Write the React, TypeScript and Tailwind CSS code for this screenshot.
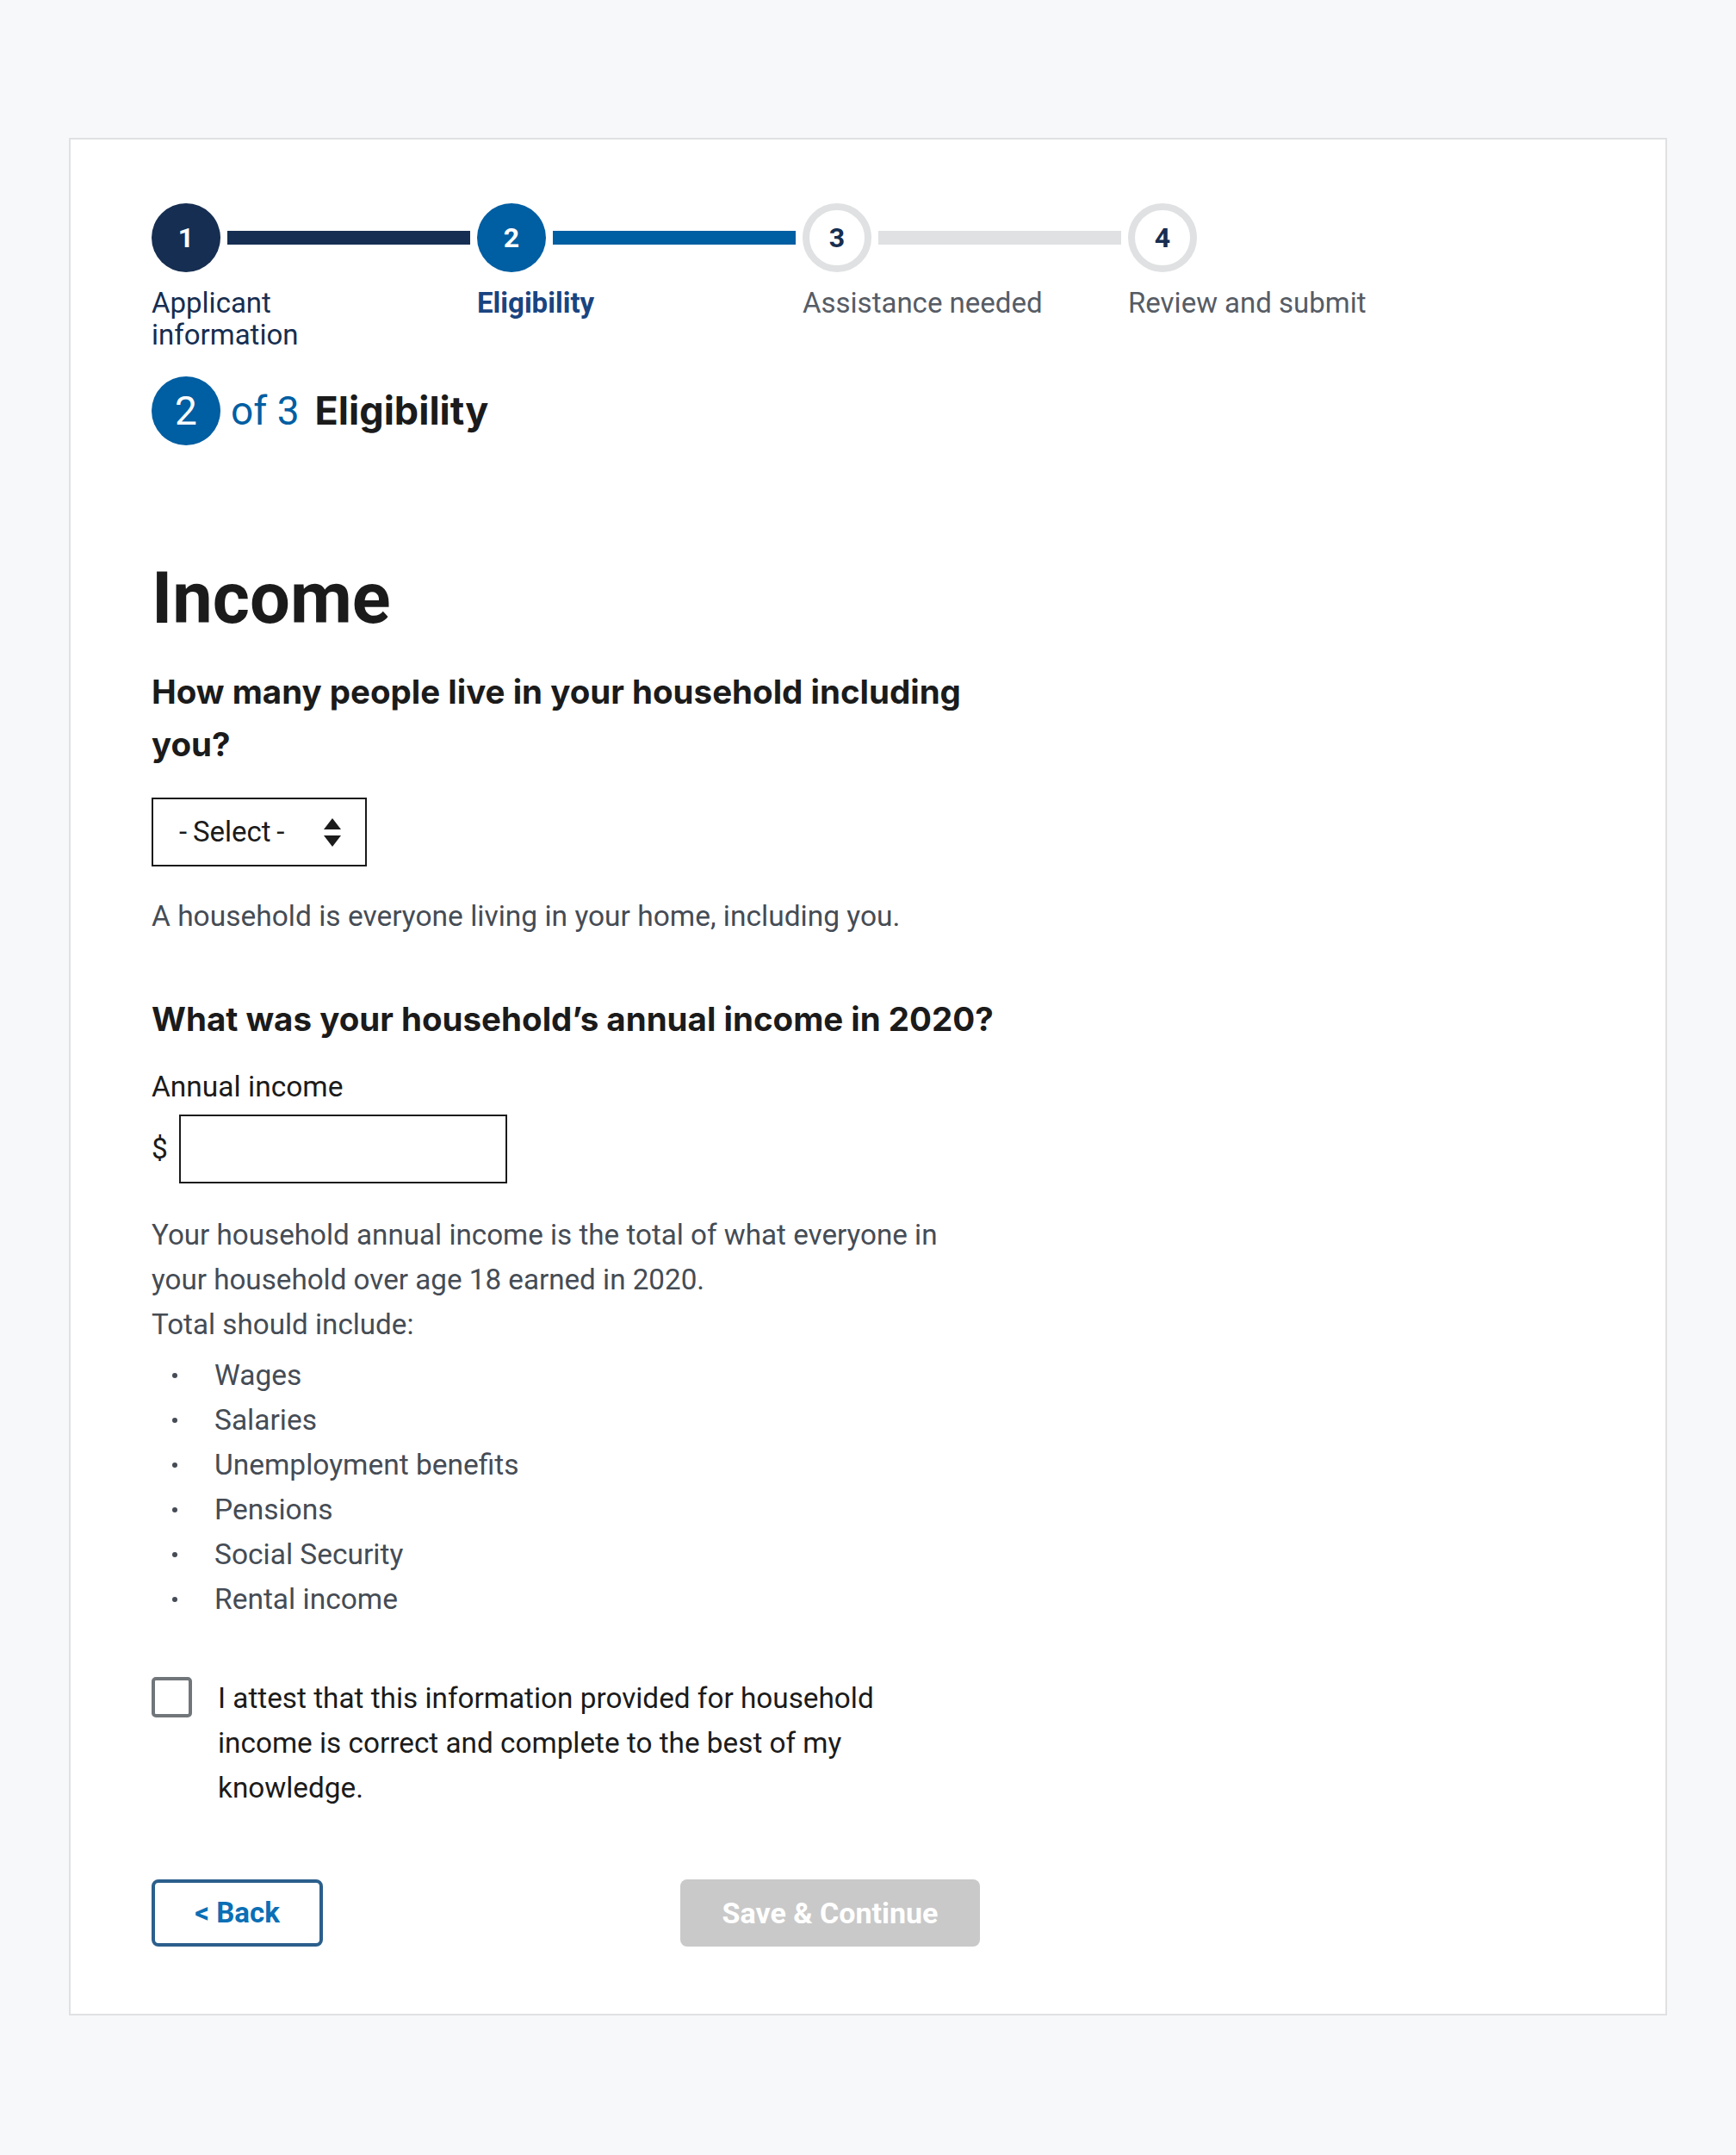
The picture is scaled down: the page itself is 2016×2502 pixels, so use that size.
import React from "react";

const steps = [
  { n: "1", label: "Applicant information", state: "done" },
  { n: "2", label: "Eligibility", state: "current" },
  { n: "3", label: "Assistance needed", state: "todo" },
  { n: "4", label: "Review and submit", state: "todo" },
];

const includes = ["Wages", "Salaries", "Unemployment benefits", "Pensions", "Social Security", "Rental income"];

const heading = { fontFamily: "Inter, Roboto, sans-serif" };

function StepIndicator() {
  return (
    <div className="flex">
      {steps.map((s, i) => {
        const circle =
          s.state === "done"
            ? "bg-[#162e51] text-white"
            : s.state === "current"
            ? "bg-[#005ea2] text-white"
            : "bg-white text-[#162e51] border-[8px] border-[#dfe1e2]";
        const line =
          s.state === "done" ? "bg-[#162e51]" : s.state === "current" ? "bg-[#005ea2]" : "bg-[#dfe1e2]";
        const label =
          s.state === "done"
            ? "text-[#162e51]"
            : s.state === "current"
            ? "text-[#1a4480] font-bold"
            : "text-[#565c65]";
        return (
          <div key={s.n} className="w-[378px] flex flex-col">
            <div className="flex items-center">
              <div
                className={`w-[80px] h-[80px] rounded-full flex items-center justify-center text-[32px] font-bold shrink-0 ${circle}`}
              >
                {s.n}
              </div>
              {i < steps.length - 1 && <div className={`h-[16px] flex-1 mx-2 ${line}`} />}
            </div>
            <div className={`mt-[17px] w-[280px] text-[33px] leading-[37px] ${label}`}>{s.label}</div>
          </div>
        );
      })}
    </div>
  );
}

function App() {
  return (
    <main
      className="bg-[#f7f8fa] min-h-[2502px] px-[80px] pt-[160px] pb-[160px] text-[#1b1b1b]"
      style={{ fontFamily: "Roboto, 'Liberation Sans', sans-serif" }}
    >
      <div className="bg-white border-2 border-[#dfe1e2] pl-[94px] pr-[94px] pt-[74px] pb-[78px]">
        <StepIndicator />

        <div className="flex items-center mt-[30px]">
          <div className="w-[80px] h-[80px] rounded-full bg-[#005ea2] text-white flex items-center justify-center text-[46px]">
            2
          </div>
          <span className="ml-[12px] text-[46px] text-[#005ea2]">of 3</span>
          <span className="ml-[18px] text-[45px] font-bold" style={heading}>
            Eligibility
          </span>
        </div>

        <div className="w-[1000px]">
          <h1 className="mt-[130px] text-[83px] leading-[96px] font-bold">Income</h1>

          <h2 className="mt-[30px] text-[38.5px] leading-[61px] font-bold whitespace-nowrap" style={heading}>
            How many people live in your household including
            <br />
            you?
          </h2>

          <div className="mt-[31px] w-[250px] h-[80px] border-2 border-[#1b1b1b] flex items-center pl-[30px] pr-[28px] justify-between">
            <span className="text-[33px]">-{"\u2009"}Select{"\u2009"}-</span>
            <svg width="20" height="33" viewBox="0 0 20 33">
              <path d="M10 0 L20 13 L0 13 Z" fill="#1b1b1b" />
              <path d="M0 20 L20 20 L10 33 Z" fill="#1b1b1b" />
            </svg>
          </div>

          <p className="mt-[32px] text-[33.5px] leading-[52px] text-[#454c55]">
            A household is everyone living in your home, including you.
          </p>

          <h2 className="mt-[63px] text-[38.5px] leading-[61px] font-bold whitespace-nowrap" style={heading}>
            What was your household’s annual income in 2020?
          </h2>

          <label className="block mt-[22px] text-[33.5px] leading-[52px]">Annual income</label>
          <div className="flex items-center mt-[6px]">
            <span className="text-[33.5px] w-[32px]">$</span>
            <div className="w-[381px] h-[80px] border-2 border-[#1b1b1b]" />
          </div>

          <p className="mt-[34px] text-[33.2px] leading-[52px] text-[#454c55] whitespace-nowrap">
            Your household annual income is the total of what everyone in
            <br />
            your household over age 18 earned in 2020.
            <br />
            Total should include:
          </p>
          <ul className="mt-[7px] text-[33.5px] leading-[52px] text-[#454c55]">
            {includes.map((item) => (
              <li key={item} className="flex items-center">
                <span className="w-[73px] pl-[24px] flex">
                  <span className="w-[6px] h-[6px] rounded-full bg-[#454c55]" />
                </span>
                {item}
              </li>
            ))}
          </ul>

          <div className="flex mt-[64px]">
            <div className="w-[47px] h-[47px] border-4 border-[#71767a] rounded-[5px] shrink-0" />
            <p className="ml-[30px] text-[33.3px] leading-[52px] whitespace-nowrap -mt-[1px]">
              I attest that this information provided for household
              <br />
              income is correct and complete to the best of my
              <br />
              knowledge.
            </p>
          </div>

          <div className="flex items-center mt-[80px]">
            <button className="w-[199px] h-[78px] border-4 border-[#2b5f8c] rounded-[8px] text-[#0b6fb5] text-[33px] font-bold bg-white">
              &lt; Back
            </button>
            <button className="ml-[415px] w-[348px] h-[78px] rounded-[8px] bg-[#c9c9c9] text-white text-[34px] font-bold">
              Save &amp; Continue
            </button>
          </div>
        </div>
      </div>
    </main>
  );
}

export default App;
